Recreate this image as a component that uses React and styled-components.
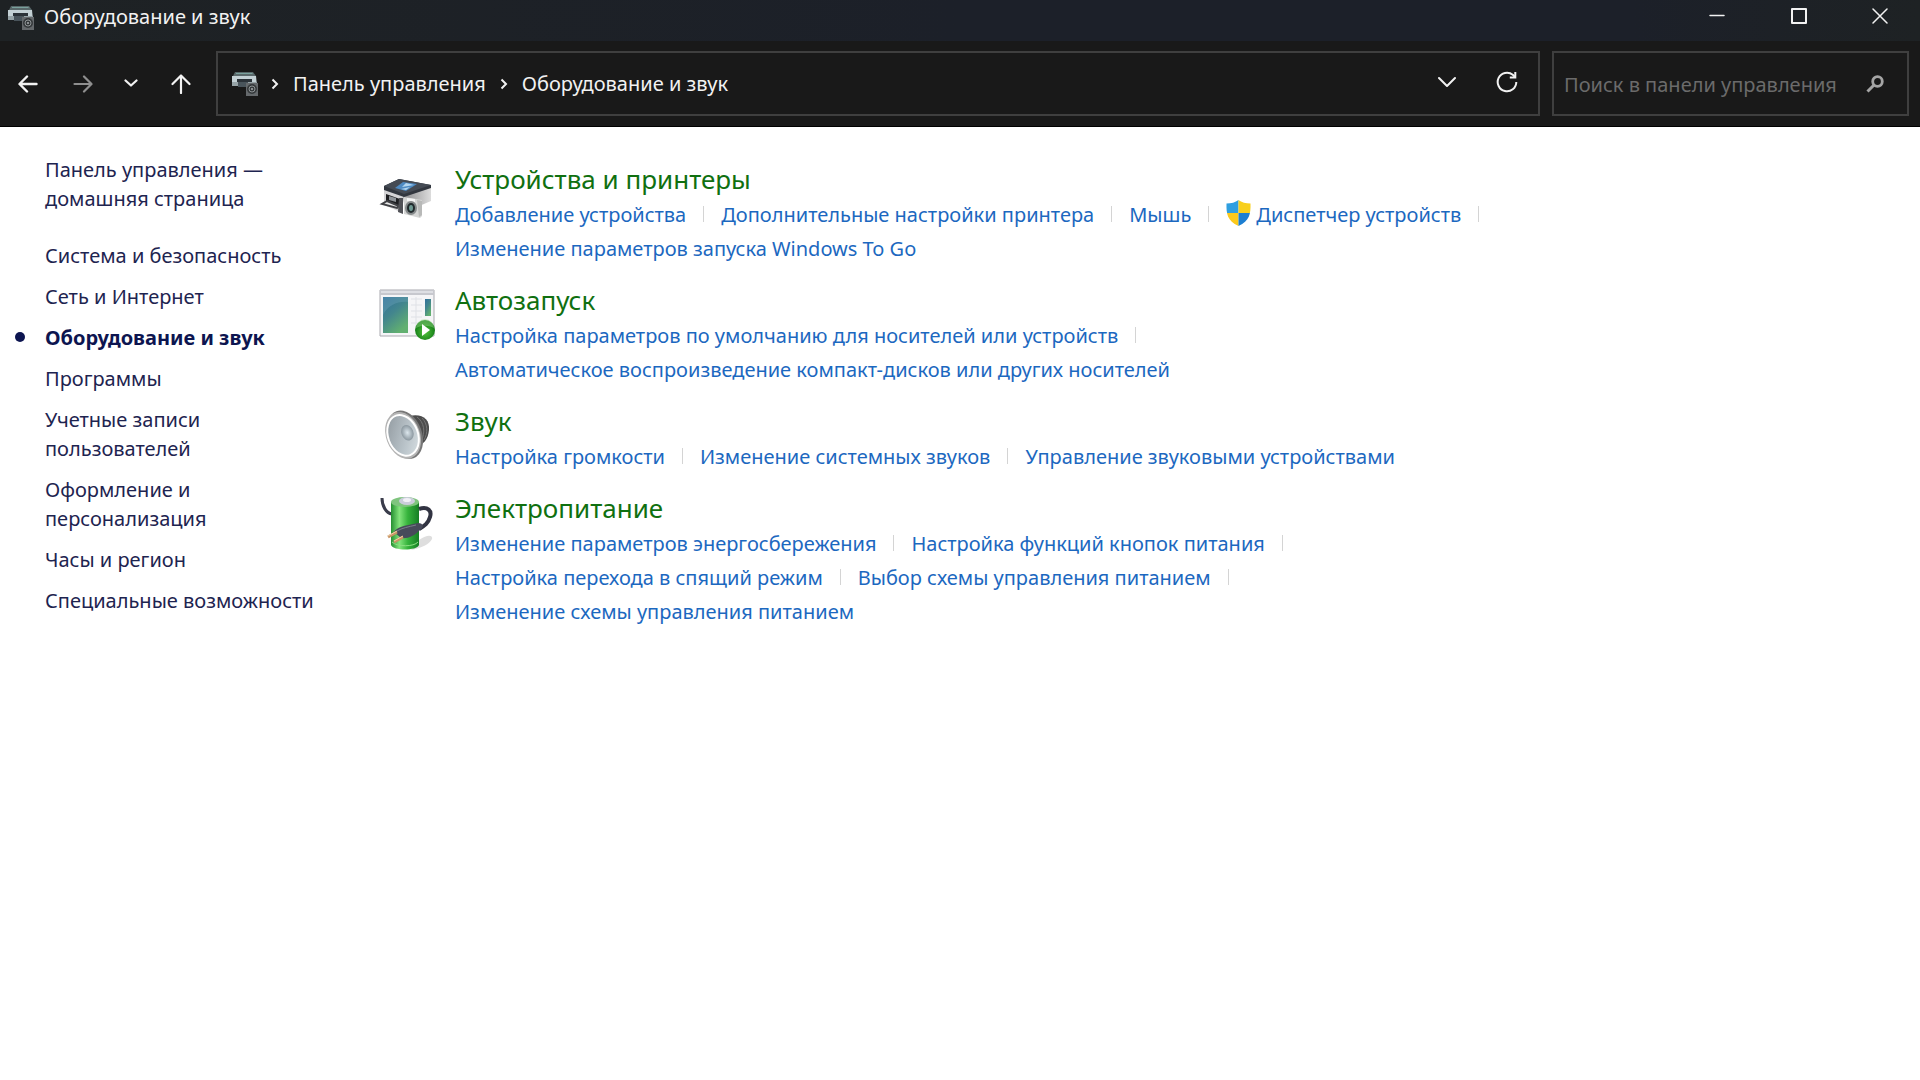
import React from 'react';
import styled, { createGlobalStyle, css } from 'styled-components';

const GlobalStyle = createGlobalStyle`
  *, *::before, *::after {
    box-sizing: border-box;
  }

  body {
    margin: 0;
    background: #ffffff;
    font-family: 'Noto Sans', 'Open Sans', sans-serif;
    font-size: 20px;
    color: #1e2450;
  }

  button, input {
    font: inherit;
    color: inherit;
  }

  a {
    color: inherit;
    text-decoration: none;
  }

  a:hover {
    text-decoration: underline;
  }
`;

const Header = styled.header`
  background: #191919;
  border-bottom: 1px solid #000000;
  color: #f2f2f2;
`;

const TitleBar = styled.div`
  display: flex;
  align-items: flex-start;
  height: 41px;
  padding-left: 7px;
  background: linear-gradient(90deg, #1e2224, #1c2029 50%, #1c2029 85%, #1e2224);
`;

const Title = styled.h1`
  flex: 1;
  margin: 0 0 0 9px;
  font-size: 20px;
  font-weight: 400;
  line-height: 34px;
`;

const TitleIcon = styled.div`
  display: flex;
  padding-top: 5px;
`;

const IconButton = styled.button`
  display: flex;
  flex: none;
  align-items: center;
  justify-content: center;
  width: ${({ width }) => width}px;
  height: ${({ height }) => height || 60}px;
  padding: 0;
  border: 0;
  background: none;
  color: ${({ muted }) => (muted ? '#8f8f8f' : '#f2f2f2')};
`;

const Toolbar = styled.div`
  display: flex;
  align-items: center;
  padding: 10px 11px 10px 0;
`;

const NavButtons = styled.div`
  display: flex;
  flex: none;
  align-items: center;
  width: 216px;
`;

const AddressBar = styled.nav`
  display: flex;
  flex: 1;
  align-items: center;
  height: 65px;
  margin-right: 12px;
  padding: 0 1px 0 13px;
  border: 2px solid #3f3f3f;
`;

const AddressActions = styled.div`
  display: flex;
  align-self: flex-start;
`;

const Crumbs = styled.ol`
  display: flex;
  flex: 1;
  align-items: center;
  gap: 2px;
  margin: 0;
  padding: 0;
  list-style: none;

  li {
    display: flex;
    align-items: center;
  }

  svg {
    margin: 0 14px 0 12px;
  }
`;

const SearchBox = styled.label`
  display: flex;
  align-items: center;
  width: 357px;
  height: 65px;
  padding: 0 23px 0 10px;
  border: 2px solid #3f3f3f;
  color: #a5a5a5;
`;

const SearchInput = styled.input`
  flex: 1;
  min-width: 0;
  padding: 2px 0 0;
  border: 0;
  outline: 0;
  background: none;

  &::placeholder {
    color: #6b6b6b;
    opacity: 1;
  }
`;

const Content = styled.div`
  display: flex;
  align-items: flex-start;
`;

const Sidebar = styled.nav`
  flex: none;
  width: 379px;
  padding: 28px 49px 0 45px;
  line-height: 29px;
`;

const HomeLink = styled.a`
  display: block;
  margin-bottom: 28px;
`;

const Categories = styled.ul`
  display: flex;
  flex-direction: column;
  gap: 12px;
  margin: 0;
  padding: 0;
  list-style: none;
`;

const Category = styled.li`
  position: relative;

  ${({ active }) =>
    active &&
    css`
      color: #0d1550;
      font-weight: 700;

      &::before {
        content: '';
        position: absolute;
        top: 9px;
        left: -30px;
        width: 10px;
        height: 10px;
        border-radius: 50%;
        background: #0d1550;
      }
    `}
`;

const Sections = styled.main`
  display: flex;
  flex: 1;
  flex-direction: column;
  gap: 15px;
  padding-top: 33px;
`;

const Section = styled.section`
  display: flex;
  align-items: flex-start;
  gap: 20px;

  > svg {
    flex: none;
    margin-top: 6px;
  }
`;

const SectionTitle = styled.h2`
  margin: 0;
  color: #107010;
  font-size: 26px;
  font-weight: 400;
  line-height: 38px;
`;

const Tasks = styled.ul`
  display: flex;
  flex-wrap: wrap;
  max-width: 1120px;
  margin: 0;
  padding: 0;
  color: #1c68c0;
  line-height: 34px;
  list-style: none;
`;

const Task = styled.li`
  display: flex;
  align-items: center;

  &:not(:last-child)::after {
    content: '';
    width: 1px;
    height: 16px;
    margin: 0 17px 2px;
    background: #d4d4d4;
  }

  a {
    display: flex;
    align-items: center;
    gap: 5px;
  }

  svg {
    margin-bottom: 4px;
  }
`;

const DeviceIcon = () => (
  <svg width="28" height="26" viewBox="0 0 28 26" aria-hidden="true">
    <path d="M4 1h18l3 4H2z" fill="#59686a" />
    <path d="M5 2h16l1 1H5z" fill="#79a19c" />
    <path d="M1 5h24l1 10H1z" fill="#c3d0d4" />
    <path d="M1 11h25v4H1z" fill="#96a3a7" />
    <path d="M6 8h15v3H6z" fill="#2b3238" />
    <path d="M7 11h10v5H7z" fill="#49545b" />
    <path d="M15 12h12v13H15z" fill="#65696c" />
    <circle cx="21" cy="18" r="5" fill="#35393b" />
    <circle cx="21" cy="18" r="3" fill="none" stroke="#8d9294" />
    <circle cx="21" cy="18" r="1" fill="#a9adaf" />
  </svg>
);

const Stroke = ({ size = 20, width = 2, d }) => (
  <svg
    width={size}
    height={size}
    viewBox={`0 0 ${size} ${size}`}
    fill="none"
    stroke="currentColor"
    strokeWidth={width}
    strokeLinecap="round"
    strokeLinejoin="round"
    aria-hidden="true"
  >
    <path d={d} />
  </svg>
);

const CrumbChevron = () => (
  <svg width="8" height="12" viewBox="0 0 8 12" fill="none" stroke="currentColor" strokeWidth="2" aria-hidden="true">
    <path d="M1.5 1.5 6 6l-4.500 4.500" />
  </svg>
);

const RefreshIcon = () => (
  <svg width="22" height="24" viewBox="0 0 22 24" fill="none" stroke="currentColor" strokeWidth="2" aria-hidden="true">
    <path d="M20.300 11a9.300 9.300 0 1 1-3.500-7.300l2.200 2.300" />
    <path d="M19.300 1v5.500h-5.500" />
  </svg>
);

const SearchIcon = () => (
  <svg width="18" height="18" viewBox="0 0 18 18" fill="none" stroke="currentColor" aria-hidden="true">
    <circle cx="11.500" cy="6.500" r="4.800" strokeWidth="2.800" />
    <path d="M8 10 1.500 16.500" strokeWidth="3" />
  </svg>
);

const ShieldIcon = () => (
  <svg width="25" height="26" viewBox="0 0 25 26" aria-hidden="true">
    <clipPath id="shield">
      <path d="M12.500 0C9.500 2.500 5 3.500 0.500 3.500c-.3 10 .8 17.500 12 22.500 11.200-5 12.300-12.500 12-22.500C20 3.500 15.500 2.500 12.500 0z" />
    </clipPath>
    <g clipPath="url(#shield)">
      <path d="M0 0h12.500v13H0z" fill="#2f9fe0" />
      <path d="M12.500 0H25v13H12.500z" fill="#f8cf1c" />
      <path d="M0 13h12.500v13H0z" fill="#fbc91c" />
      <path d="M12.500 13H25v13H12.500z" fill="#1c7fd2" />
    </g>
  </svg>
);

const PrinterIcon = () => (
  <svg width="56" height="56" viewBox="0 0 56 56" aria-hidden="true">
    <defs>
      <linearGradient id="printerSide" x1="0" x2="1">
        <stop offset="0" stopColor="#8c8c8e" />
        <stop offset="1" stopColor="#dcdcdc" />
      </linearGradient>
    </defs>
    <path d="M5 22 24 29v18L5 39z" fill="#d4d4d6" />
    <path d="M24 29 52 20v15L26 46z" fill="url(#printerSide)" />
    <path d="M20 13 52 19v3L25 31 5 24v-4z" fill="#32373f" />
    <path d="M20 13 52 19 25 28 5 20z" fill="#454b54" />
    <path d="m24 16 14 2-11 7-11-3z" fill="#4e8ac2" />
    <path d="m27 17 8 2-12 2zM22 23l9-2-4 3z" fill="#b3d5ee" />
    <path d="m7 28 14 5v7L7 35z" fill="#1e1f22" />
    <path d="m10 30 7 2v4l-7-2z" fill="#8f9499" />
    <path d="m8 35 12 5-2 2L3 38z" fill="#e9e9e9" stroke="#414246" strokeWidth="2" />
    <path d="M20 32h4v16l-5-2z" fill="#515257" />
    <path d="m25 31 18 3v16l-2 2-16-4z" fill="#d5d6d5" />
    <path d="m38 34 5 1v14l-3 2z" fill="#b8b9b8" />
    <path d="m28 32 8 1v3l-8-1z" fill="#f5f5f5" />
    <ellipse cx="32" cy="42" rx="6" ry="7" fill="#85898a" />
    <ellipse cx="32" cy="42" rx="4" ry="5" fill="#20292b" />
    <ellipse cx="32" cy="42" rx="2" ry="3" fill="#6e9892" />
  </svg>
);

const AutoplayIcon = () => (
  <svg width="56" height="56" viewBox="0 0 56 56" aria-hidden="true">
    <defs>
      <linearGradient id="screen" x1="0" y1="0" x2="0.600" y2="1">
        <stop offset="0" stopColor="#316f9d" />
        <stop offset="0.500" stopColor="#43868d" />
        <stop offset="1" stopColor="#62b070" />
      </linearGradient>
      <radialGradient id="play" cx="0.500" cy="0.600">
        <stop offset="0" stopColor="#54c33d" />
        <stop offset="1" stopColor="#168018" />
      </radialGradient>
    </defs>
    <path d="M1 3h54v46H1z" fill="#f5f5f7" stroke="#a9a9af" strokeWidth="1" />
    <path d="M1 3h54v5H1z" fill="#c7c8ce" />
    <path d="M2 4h52v2H2z" fill="#dedfe4" />
    <path d="M4 10h25v36H4z" fill="url(#screen)" />
    <path d="M4 10h25v5C19 14 9 18 4 28z" fill="#74a8bd" opacity="0.350" />
    <path d="M32 12h11M32 18h11M32 24h11M32 30h11M32 36h8M37 10v30" stroke="#dfe1e6" />
    <path d="M46 12h6v17h-6z" fill="url(#screen)" />
    <circle cx="46" cy="43" r="10" fill="url(#play)" />
    <path d="M37 41a9 9 0 0 1 18 0c-6-3-12-3-18 0z" fill="#9bd98b" opacity="0.450" />
    <path d="m43 37 8 6-8 6z" fill="#ffffff" />
  </svg>
);

const SpeakerIcon = () => (
  <svg width="56" height="56" viewBox="0 0 56 56" aria-hidden="true">
    <defs>
      <linearGradient id="cone" x1="0" y1="0" x2="1" y2="1">
        <stop offset="0" stopColor="#8f979d" />
        <stop offset="0.600" stopColor="#bac4ca" />
        <stop offset="1" stopColor="#dbe2e5" />
      </linearGradient>
      <radialGradient id="cap">
        <stop offset="0" stopColor="#dce7ed" />
        <stop offset="1" stopColor="#8b979f" />
      </radialGradient>
    </defs>
    <path d="M30 8c13-3 21 3 20 14-1 9-5 15-14 17z" fill="#4c4c4c" />
    <path d="M38 9c7 5 9 15 4 25M43 10c6 6 6 15 2 22" fill="none" stroke="#757575" strokeWidth="1" />
    <g transform="rotate(-20 25 27)">
      <ellipse cx="26" cy="27" rx="17" ry="25" fill="#777777" />
      <ellipse cx="24" cy="27" rx="17" ry="24" fill="#b4b4b4" />
      <ellipse cx="24" cy="27" rx="16" ry="22" fill="#ffffff" />
      <ellipse cx="24" cy="27" rx="14" ry="20" fill="url(#cone)" />
      <ellipse cx="29" cy="26" rx="6" ry="8" fill="url(#cap)" />
    </g>
  </svg>
);

const PowerIcon = () => (
  <svg width="56" height="56" viewBox="0 0 56 56" aria-hidden="true">
    <defs>
      <linearGradient id="battery" x1="0" x2="1">
        <stop offset="0" stopColor="#258f31" />
        <stop offset="0.300" stopColor="#83e47c" />
        <stop offset="0.600" stopColor="#36b33c" />
        <stop offset="1" stopColor="#167e25" />
      </linearGradient>
    </defs>
    <path d="M40 45c10-7 14-4 13-1-2 5-11 9-21 11z" fill="#dedede" />
    <path d="M3 3c0 8 4 15 10 16" fill="none" stroke="#3a3c4b" strokeWidth="3" />
    <path d="M12 7v43c2 6 26 6 28 0V7z" fill="url(#battery)" />
    <ellipse cx="26" cy="7" rx="14" ry="5" fill="#7fc47e" />
    <ellipse cx="28" cy="6" rx="8" ry="4" fill="#cbcddb" />
    <ellipse cx="28" cy="5" rx="4" ry="2" fill="#f1f1f7" />
    <path d="M13 47c5 5 22 5 26 0" fill="none" stroke="#8ce083" strokeWidth="1" />
    <path d="M40 14c9-3 13 2 11 8-2 7-6 9-11 12" fill="none" stroke="#323442" strokeWidth="4" />
    <path d="M15 37c3-5 9-6 24-9 6 0 6 5 2 7-6 6-12 9-19 8z" fill="#474a5a" />
    <path d="M18 36c5-3 11-4 19-6" fill="none" stroke="#7b7d8b" strokeWidth="1" />
    <path d="m18 37-9 5M24 42l-9 5" stroke="#c89465" strokeWidth="3" />
    <path d="m18 36-9 5M24 41l-9 5" stroke="#f0d0a6" strokeWidth="1" />
  </svg>
);

const categories = [
  'Система и безопасность',
  'Сеть и Интернет',
  'Оборудование и звук',
  'Программы',
  'Учетные записи пользователей',
  'Оформление и персонализация',
  'Часы и регион',
  'Специальные возможности',
];

const sections = [
  {
    title: 'Устройства и принтеры',
    Icon: PrinterIcon,
    tasks: [
      'Добавление устройства',
      'Дополнительные настройки принтера',
      'Мышь',
      'Диспетчер устройств',
      'Изменение параметров запуска Windows To Go',
    ],
    elevated: 'Диспетчер устройств',
  },
  {
    title: 'Автозапуск',
    Icon: AutoplayIcon,
    tasks: [
      'Настройка параметров по умолчанию для носителей или устройств',
      'Автоматическое воспроизведение компакт-дисков или других носителей',
    ],
  },
  {
    title: 'Звук',
    Icon: SpeakerIcon,
    tasks: ['Настройка громкости', 'Изменение системных звуков', 'Управление звуковыми устройствами'],
  },
  {
    title: 'Электропитание',
    Icon: PowerIcon,
    tasks: [
      'Изменение параметров энергосбережения',
      'Настройка функций кнопок питания',
      'Настройка перехода в спящий режим',
      'Выбор схемы управления питанием',
      'Изменение схемы управления питанием',
    ],
  },
];

const App = () => (
  <>
    <GlobalStyle />
    <Header>
      <TitleBar>
        <TitleIcon>
          <DeviceIcon />
        </TitleIcon>
        <Title>Оборудование и звук</Title>
        <IconButton width={82} height={32} aria-label="Свернуть">
          <Stroke size={16} width={1.5} d="M1 7.500h14" />
        </IconButton>
        <IconButton width={82} height={32} aria-label="Развернуть">
          <Stroke size={16} d="M1 1h14v14H1z" />
        </IconButton>
        <IconButton width={80} height={32} aria-label="Закрыть">
          <Stroke size={16} width={1.5} d="m1 1 14 14M15 1 1 15" />
        </IconButton>
      </TitleBar>
      <Toolbar>
        <NavButtons>
          <IconButton width={56} aria-label="Назад">
            <Stroke width={2.4} d="M18.500 10H2m7-7.500L1.500 10l7.500 7.500" />
          </IconButton>
          <IconButton width={54} muted aria-label="Вперед">
            <Stroke width={2.2} d="M1.500 10H18M11 2.500l7.500 7.500-7.500 7.500" />
          </IconButton>
          <IconButton width={42} aria-label="Последние страницы">
            <Stroke size={14} width={2.2} d="m1.500 3.500 5.500 5 5.500-5" />
          </IconButton>
          <IconButton width={58} aria-label="Вверх">
            <Stroke width={2.2} d="M10 19V1.500M1.500 10 10 1.500 18.500 10" />
          </IconButton>
        </NavButtons>
        <AddressBar aria-label="Адрес">
          <DeviceIcon />
          <Crumbs>
            <li>
              <CrumbChevron />
              <a href="#control-panel">Панель управления</a>
            </li>
            <li>
              <CrumbChevron />
              <a href="#hardware">Оборудование и звук</a>
            </li>
          </Crumbs>
          <AddressActions>
            <IconButton width={60} aria-label="Предыдущие расположения">
              <Stroke size={18} d="m1 4 8 8 8-8" />
            </IconButton>
            <IconButton width={60} aria-label="Обновить">
              <RefreshIcon />
            </IconButton>
          </AddressActions>
        </AddressBar>
        <SearchBox>
          <SearchInput type="text" aria-label="Поиск" placeholder="Поиск в панели управления" />
          <SearchIcon />
        </SearchBox>
      </Toolbar>
    </Header>
    <Content>
      <Sidebar aria-label="Категории">
        <HomeLink href="#home">Панель управления — домашняя страница</HomeLink>
        <Categories>
          {categories.map((name) => (
            <Category key={name} active={name === 'Оборудование и звук' ? 1 : 0}>
              <a href="#category">{name}</a>
            </Category>
          ))}
        </Categories>
      </Sidebar>
      <Sections>
        {sections.map(({ title, Icon, tasks, elevated }) => (
          <Section key={title}>
            <Icon />
            <div>
              <SectionTitle>
                <a href="#section">{title}</a>
              </SectionTitle>
              <Tasks>
                {tasks.map((task) => (
                  <Task key={task}>
                    <a href="#task">
                      {task === elevated && <ShieldIcon />}
                      {task}
                    </a>
                  </Task>
                ))}
              </Tasks>
            </div>
          </Section>
        ))}
      </Sections>
    </Content>
  </>
);

export default App;
